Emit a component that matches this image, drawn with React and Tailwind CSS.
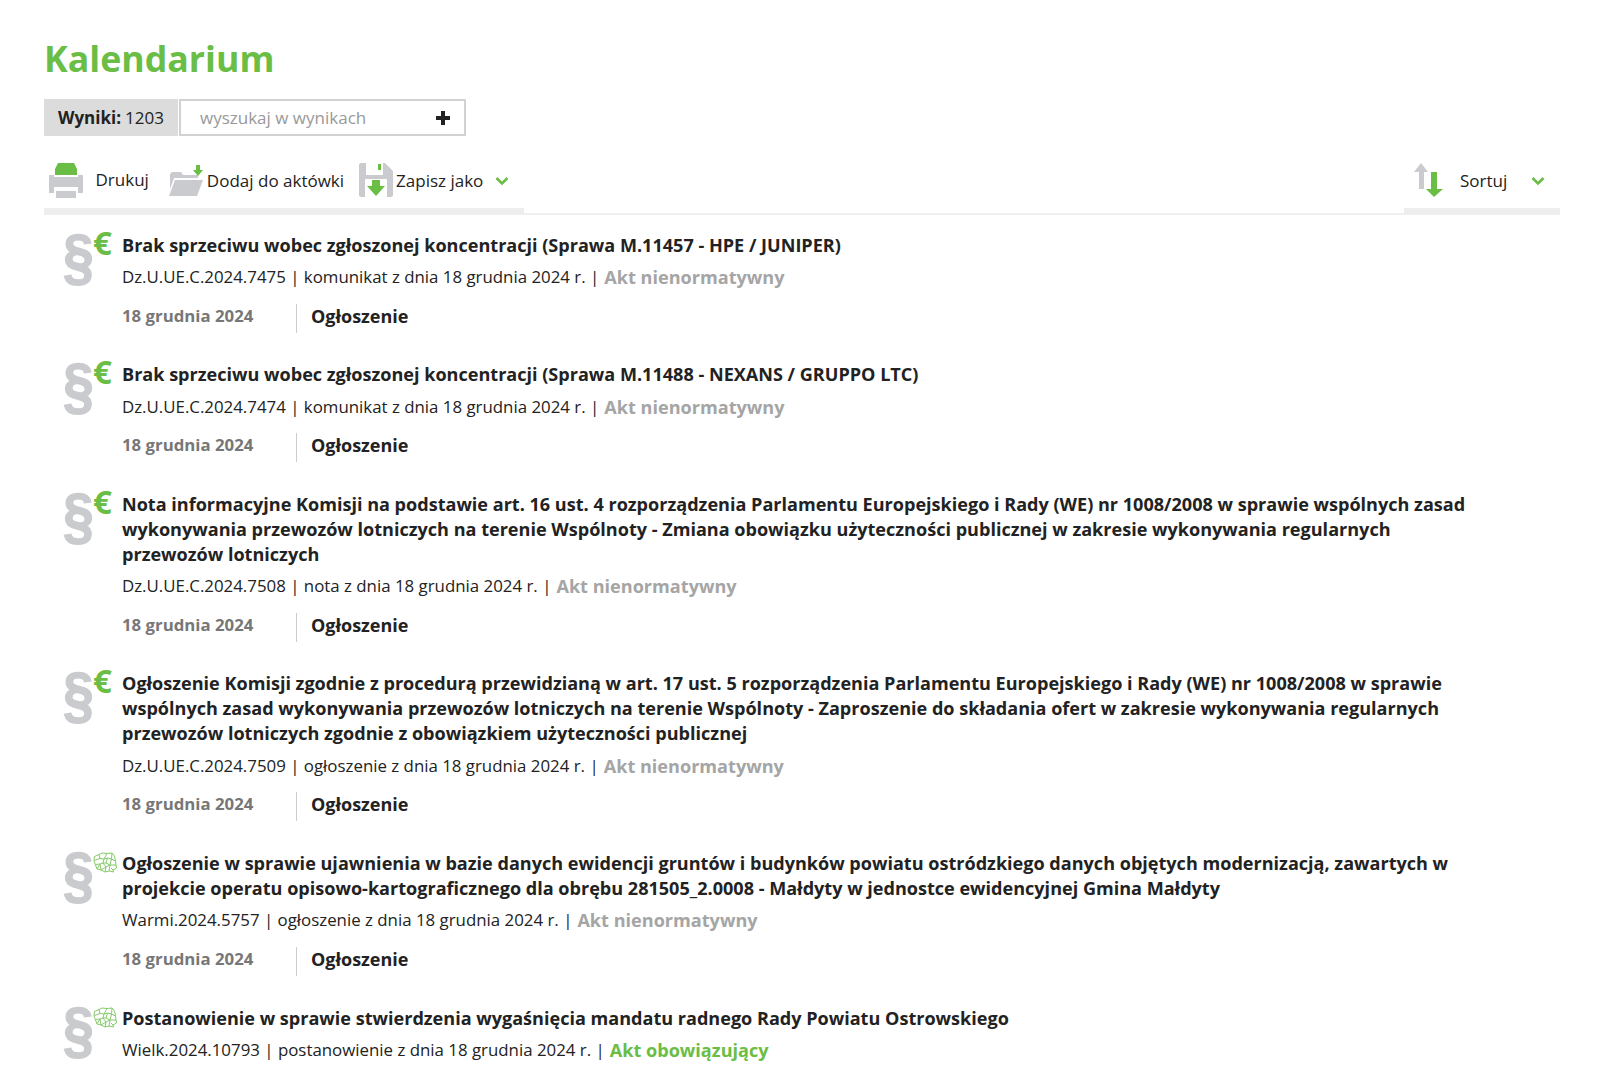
const green = "#6abd45";

function Para() {
  return (
    <div className="w-[78px] shrink-0 h-[60px] pl-[17px] overflow-visible">
      <span className="block w-[32px] text-center text-[#c9cbce] text-[63px] leading-[58px] font-bold -mt-[6px] scale-x-[0.88] [-webkit-text-stroke:1.4px_#c9cbce] [font-family:'Liberation_Sans',sans-serif]">§</span>
    </div>
  );
}

function Euro() {
  return <span className="absolute left-[49px] -top-[7px] w-[20px] text-[#6abd45] text-[33px] leading-[33px] font-bold [font-family:'Open_Sans',sans-serif]">€</span>;
}

function MapIcon() {
  return (
    <svg className="absolute left-[49px] top-[1px]" width="24" height="21" viewBox="0 0 24 21" fill="none" stroke="#84cb69" strokeWidth="1" strokeLinejoin="round">
      <path d="M1.5 4.5L6 2.5L9 1L14 1.5L19 1L21.5 4L22.5 9L23 13L23.5 16L20 18L20.5 20L16 19L12 20L8 18L4 17L2.5 13L1 9Z" />
      <path d="M6 2.5L7 6.5L1.5 8.5M7 6.5L11 7L14 1.5M11 7L10 11L7 12L2.5 12.5M10 11L13 15L12 20M13 15L17 13L18.5 7L14.5 6L11 7M18.5 7L22.5 9M17 13L23 13M17 13L16 19M8 18L7 12M14.5 6L13 11L10 11M13 11L17 13M18.5 7L19 1M7 12L4 17M13 15L8 18M18 16L20 18" />
    </svg>
  );
}

function Item({ title, code, kind, status, active, map, showFoot = true }) {
  return (
    <div className="flex relative pb-[29.6px]">
      <Para />
      {map ? <MapIcon /> : <Euro />}
      <div className="flex-1 pr-[90px]">
        <div className="text-[18.07px] leading-[25px] font-bold text-[#222]">{title}</div>
        <div className="mt-[6.5px] h-[25px] text-[16.85px] leading-[25px] text-[#222] flex items-start">
          <span>{code} | {kind} z dnia 18 grudnia 2024 r. | </span>
          <span className={`ml-[5px] text-[18.1px] leading-[26px] font-bold ${active ? "text-[#6abd45]" : "text-[#a5a5a5]"}`}>{status}</span>
        </div>
        {showFoot && (
          <div className="mt-[14.5px] flex h-[29px] items-start">
            <span className="w-[175px] text-[16.8px] font-bold text-[#777] h-full border-r border-[#ccc] leading-[23px]">18 grudnia 2024</span>
            <span className="ml-[14px] text-[18px] font-bold leading-[25px] text-[#222]">Ogłoszenie</span>
          </div>
        )}
      </div>
    </div>
  );
}

function Chevron({ className }) {
  return (
    <svg className={className} width="14" height="10" viewBox="0 0 14 10" fill="none" stroke={green} strokeWidth="2.6">
      <path d="M1.5 2L7 7.5L12.5 2" />
    </svg>
  );
}

function PrintIcon() {
  return (
    <svg width="34" height="35" viewBox="0 0 34 35">
      <path d="M9 0H25L28 6V12H6V6Z" fill={green} />
      <path d="M0 12H5V14H29V12H34V30H29V24H5V30H0Z" fill="#c9cbce" />
      <path d="M7 28H27V35H7Z" fill="#c9cbce" />
    </svg>
  );
}

function FolderIcon() {
  return (
    <svg width="35" height="32" viewBox="0 0 35 32">
      <path d="M1 9V24L5 13H29V10H14L12 7H3Z" fill="#c9cbce" />
      <path d="M6 15H34L28 31H0Z" fill="#c9cbce" />
      <path d="M27 0H31V5H34L29 11L24 5H27Z" fill={green} />
    </svg>
  );
}

function SaveIcon() {
  return (
    <svg width="34" height="34" viewBox="0 0 34 34">
      <path d="M2 0H26L34 8V32A2 2 0 0 1 32 34H2A2 2 0 0 1 0 32V2A2 2 0 0 1 2 0Z" fill="#c9cbce" />
      <path d="M7 0H24V12H7Z" fill="#fff" />
      <path d="M19 1H22V7H19Z" fill={green} />
      <path d="M6 16H28V34H6Z" fill="#fff" />
      <path d="M13 17H21V23H26L17 33L8 23H13Z" fill={green} />
    </svg>
  );
}

function SortIcon() {
  return (
    <svg width="30" height="34" viewBox="0 0 30 34">
      <path d="M7 0L14 9H10V26H5V9H0Z" fill="#c9cbce" />
      <path d="M17 9H23V26H29L20 34L12 26H17Z" fill={green} />
    </svg>
  );
}

export default function App() {
  return (
    <div className="w-[1600px] h-[1067px] overflow-hidden bg-white pl-[44px] pr-[40px] [font-family:'Open_Sans',sans-serif] text-[#222]">
      <h1 className="pt-[33px] text-[35.7px] leading-[50px] font-bold text-[#6abd45]">Kalendarium</h1>
      <div className="mt-[16px] flex h-[37px]">
        <div className="w-[134px] bg-[#dcdcdc] flex items-center pl-[14px] text-[17px]">
          <b className="font-bold">Wyniki:</b><span className="ml-[4px]">1203</span>
        </div>
        <div className="ml-[1px] w-[287px] border-2 border-[#d2d2d2] flex items-center justify-between pl-[19px] pr-[14px]">
          <span className="text-[17px] text-[#999]">wyszukaj w wynikach</span>
          <span className="relative w-[14px] h-[14px]">
            <span className="absolute left-0 top-[5px] w-[14px] h-[4px] bg-[#222]" />
            <span className="absolute left-[5px] top-0 w-[4px] h-[14px] bg-[#222]" />
          </span>
        </div>
      </div>
      <div className="mt-[24px] flex h-[55px] border-b-2 border-[#f0f0f0]">
        <div className="w-[480px] flex h-[55px] border-b-[7px] border-[#eee] shrink-0 pt-[3px]">
          <div className="ml-[5px]"><PrintIcon /></div>
          <span className="ml-[12.5px] text-[17px] mt-[2px] leading-[30px]">Drukuj</span>
          <div className="ml-[20px] mt-[2px]"><FolderIcon /></div>
          <span className="ml-[3px] text-[17px] mt-[3px] leading-[30px]">Dodaj do aktówki</span>
          <div className="ml-[15px]"><SaveIcon /></div>
          <span className="ml-[3px] text-[17px] mt-[3px] leading-[30px]">Zapisz jako</span>
          <Chevron className="ml-[12px] mt-[13px]" />
        </div>
        <div className="flex-1" />
        <div className="w-[156px] flex h-[55px] border-b-[7px] border-[#eee] shrink-0 pt-[3px]">
          <div className="ml-[10px]"><SortIcon /></div>
          <span className="ml-[16px] text-[17px] mt-[3px] leading-[30px]">Sortuj</span>
          <Chevron className="ml-[24px] mt-[13px]" />
        </div>
      </div>
      <div className="pt-[17.6px]">
        <Item title="Brak sprzeciwu wobec zgłoszonej koncentracji (Sprawa M.11457 - HPE / JUNIPER)" code="Dz.U.UE.C.2024.7475" kind="komunikat" status="Akt nienormatywny" />
        <Item title="Brak sprzeciwu wobec zgłoszonej koncentracji (Sprawa M.11488 - NEXANS / GRUPPO LTC)" code="Dz.U.UE.C.2024.7474" kind="komunikat" status="Akt nienormatywny" />
        <Item title="Nota informacyjne Komisji na podstawie art. 16 ust. 4 rozporządzenia Parlamentu Europejskiego i Rady (WE) nr 1008/2008 w sprawie wspólnych zasad wykonywania przewozów lotniczych na terenie Wspólnoty - Zmiana obowiązku użyteczności publicznej w zakresie wykonywania regularnych przewozów lotniczych" code="Dz.U.UE.C.2024.7508" kind="nota" status="Akt nienormatywny" />
        <Item title="Ogłoszenie Komisji zgodnie z procedurą przewidzianą w art. 17 ust. 5 rozporządzenia Parlamentu Europejskiego i Rady (WE) nr 1008/2008 w sprawie wspólnych zasad wykonywania przewozów lotniczych na terenie Wspólnoty - Zaproszenie do składania ofert w zakresie wykonywania regularnych przewozów lotniczych zgodnie z obowiązkiem użyteczności publicznej" code="Dz.U.UE.C.2024.7509" kind="ogłoszenie" status="Akt nienormatywny" />
        <Item map title="Ogłoszenie w sprawie ujawnienia w bazie danych ewidencji gruntów i budynków powiatu ostródzkiego danych objętych modernizacją, zawartych w projekcie operatu opisowo-kartograficznego dla obrębu 281505_2.0008 - Małdyty w jednostce ewidencyjnej Gmina Małdyty" code="Warmi.2024.5757" kind="ogłoszenie" status="Akt nienormatywny" />
        <Item map active showFoot={false} title="Postanowienie w sprawie stwierdzenia wygaśnięcia mandatu radnego Rady Powiatu Ostrowskiego" code="Wielk.2024.10793" kind="postanowienie" status="Akt obowiązujący" />
      </div>
    </div>
  );
}
